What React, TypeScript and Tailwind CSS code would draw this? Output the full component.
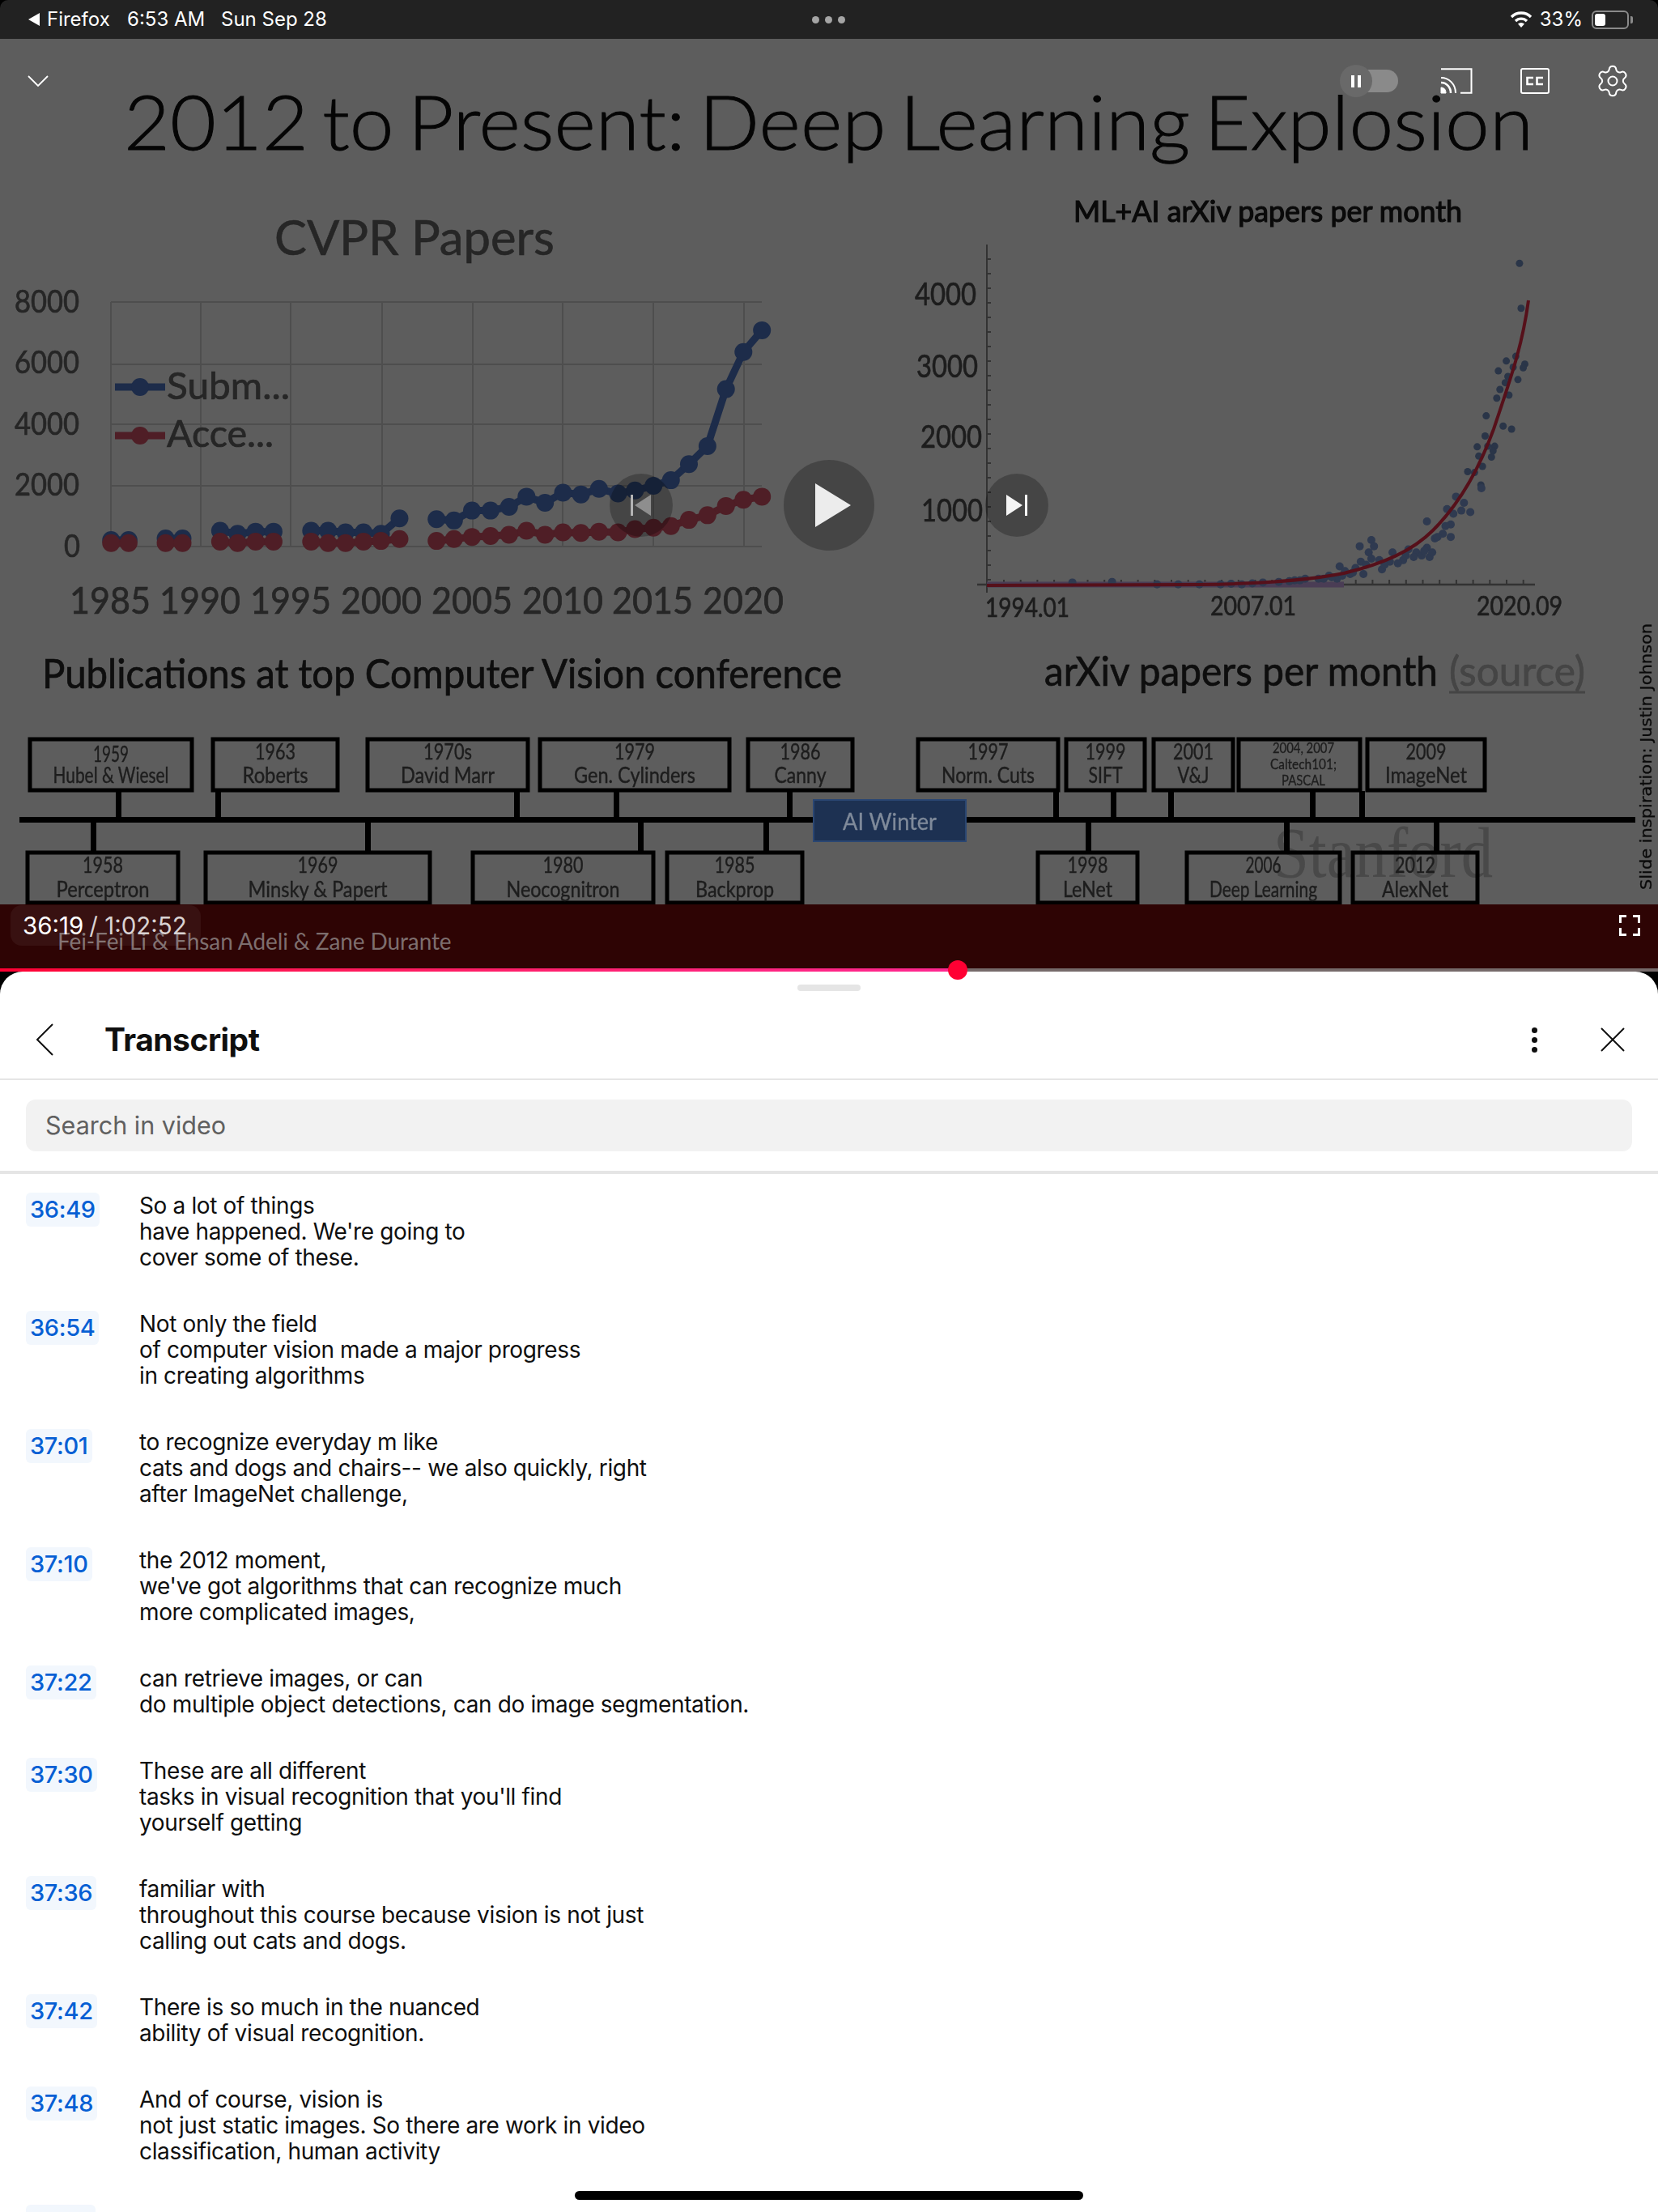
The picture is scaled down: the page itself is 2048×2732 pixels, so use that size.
import React from "react";
import { Settings } from "lucide-react";

const X1 = (x: number) => x / 1.53;
const X2 = (x: number) => 1024 + x / 1.53;
const Y = (y: number) => 600 + y / 2.613;

const blueA = [[210,175],[243,175]];
const blueB = [[313,170],[345,170]];
const blueC = [[416,145],[449,155],[483,148],[517,148]];
const blueD = [[588,145],[620,145],[653,150],[687,150],[720,155],[755,105]];
const blueE = [[825,108],[858,112],[892,80],[927,80],[962,68],[995,35],[1030,55],[1064,22],[1098,28],[1132,10],[1168,25],[1200,15],[1235,0],[1268,-18],[1302,-70],[1337,-128],[1372,-312],[1405,-432],[1440,-502]];
const redA = [[210,185],[243,185]];
const redB = [[313,185],[345,185]];
const redC = [[416,180],[449,185],[483,180],[517,180]];
const redD = [[588,180],[620,185],[653,185],[687,180],[720,178],[755,172]];
const redE = [[825,178],[858,172],[892,165],[927,162],[962,158],[995,145],[1030,158],[1064,150],[1098,152],[1132,148],[1168,150],[1200,140],[1235,135],[1268,130],[1302,110],[1337,95],[1372,65],[1405,45],[1440,35]];

const scatterTop = [[1305,850],[1308,995],[1298,1150],[1280,1165],[1265,1197],[1315,1175],[1312,1187],[1293,1185],[1283,1215],[1302,1225],[1278,1235],[1268,1257],[1262,1285],[1285,1275],[1242,1342],[1274,1375],[1290,1385],[1240,1407],[1225,1442],[1258,1440],[1245,1440],[1255,1455],[1228,1472],[1252,1475],[1235,1505],[1207,1522],[1220,1525],[1232,1565]];
const scatterBottom = [[1233,8],[1185,35],[1168,75],[1200,55],[1212,85],[1175,125],[1130,115],[1160,155],[1175,165],[1145,170],[1130,200],[1135,230],[1110,215],[1095,205],[1120,225],[1085,240],[1065,215],[1060,245],[1045,270],[1025,175],[1030,195],[1003,195],[1020,215],[1025,235],[1005,245],[1010,285],[995,265],[985,285],[965,260],[975,275],[945,290],[960,300],[925,300],[900,300],[880,305],[850,310],[800,315],[780,318],[740,318],[700,318],[660,318],[620,318],[535,310],[460,312],[1150,165],[1165,130],[1125,210],[1105,230],[1075,250],[1050,255],[1040,240],[1015,255],[990,280],[970,290],[950,295],[935,300],[1090,225],[1140,215],[1180,90],[1195,80],[890,305],[870,308],[820,312],[760,316]];

const topBoxes: [number, number, string, number, string, number][] = [
  [37,237,"1959",44,"Hubel & Wiesel",143],[263,417,"1963",50,"Roberts",81],[454,652,"1970s",60,"David Marr",116],[667,901,"1979",50,"Gen. Cylinders",150],[924,1053,"1986",50,"Canny",64],
  [1134,1307,"1997",50,"Norm. Cuts",115],[1317,1414,"1999",50,"SIFT",42],[1425,1523,"2001",50,"V&J",39],[1689,1834,"2009",50,"ImageNet",101],
];
const bottomBoxes: [number, number, string, number, string, number][] = [
  [34,220,"1958",50,"Perceptron",115],[254,531,"1969",50,"Minsky & Papert",172],[584,807,"1980",50,"Neocognitron",140],[824,991,"1985",50,"Backprop",97],
  [1282,1405,"1998",50,"LeNet",61],[1466,1655,"2006",44,"Deep Learning",133],[1671,1825,"2012",50,"AlexNet",82],
];
const upTicks = [146,269,638,761,975,1304,1375,1446,1621,1682];
const downTicks = [115,454,791,946,1344,1589,1774];
const years = [[86,"1985"],[197,"1990"],[309,"1995"],[421,"2000"],[533,"2005"],[645,"2010"],[756,"2015"],[868,"2020"]] as [number,string][];

function T({ x, y, s, w, fill, children, heavy = 0.7, anchor }: { x: number; y: number; s: number; w: number; fill: string; children: React.ReactNode; heavy?: number; anchor?: "middle" }) {
  return (
    <text x={x} y={y} fontSize={s} fill={fill} stroke={fill} strokeWidth={heavy} textLength={w} lengthAdjust="spacingAndGlyphs" textAnchor={anchor}>
      {children}
    </text>
  );
}

function Series({ pts, color }: { pts: number[][]; color: string }) {
  const p = pts.map(([x, y]) => [X1(x), Y(y)]);
  return (
    <g>
      <polyline points={p.map((q) => q.join(",")).join(" ")} fill="none" stroke={color} strokeWidth={9} />
      {p.map(([x, y], i) => (
        <circle key={i} cx={x} cy={y} r={11} fill={color} />
      ))}
    </g>
  );
}

function Slide() {
  const dark = "#262626";
  const blue = "#1d2c4a";
  const red = "#4f1e26";
  return (
    <svg className="absolute inset-0 w-full h-full blur-[0.4px]" viewBox="0 48 2048 1148" fontFamily="Lato, sans-serif">
      <text x={153} y={185} fontSize={92} fontWeight={300} wordSpacing={-9} fill="#050505" stroke="#050505" strokeWidth={0.9} textLength={1741} lengthAdjust="spacingAndGlyphs">2012 to Present: Deep Learning Explosion</text>
      <T x={339} y={315} s={60} w={346} fill={dark} heavy={0.6}>CVPR Papers</T>

      {[373,450,524,600,675].map((y) => <line key={y} x1={137} x2={941} y1={y} y2={y} stroke="#4e4e4e" strokeWidth={2} />)}
      {[137,248,359,472,584,695,807,919].map((x) => <line key={x} x1={x} x2={x} y1={373} y2={675} stroke="#4e4e4e" strokeWidth={2} />)}
      {([[384,"8000"],[459,"6000"],[535,"4000"],[610,"2000"]] as [number,string][]).map(([y,t]) => (
        <T key={t} x={18} y={y+2} s={38} w={80} fill={dark}>{t}</T>
      ))}
      <T x={79} y={688} s={38} w={20} fill={dark}>0</T>

      <line x1={142} x2={204} y1={478} y2={478} stroke={blue} strokeWidth={9} />
      <circle cx={173} cy={478} r={11} fill={blue} />
      <T x={206} y={493} s={46} w={152} fill={dark}>Subm...</T>
      <line x1={142} x2={204} y1={538} y2={538} stroke={red} strokeWidth={9} />
      <circle cx={173} cy={538} r={11} fill={red} />
      <T x={206} y={552} s={46} w={132} fill={dark}>Acce...</T>

      {[blueA,blueB,blueC,blueD,blueE].map((s,i) => <Series key={i} pts={s} color={blue} />)}
      {[redA,redB,redC,redD,redE].map((s,i) => <Series key={i} pts={s} color={red} />)}

      {years.map(([x,t]) => <T key={t} x={x} y={758} s={46} w={100} fill={dark}>{t}</T>)}
      <T x={52} y={850} s={50} w={988} fill="#0e0e0e">Publications at top Computer Vision conference</T>

      <T x={1326} y={274} s={36} w={480} fill="#0a0a0a" heavy={1.2}>ML+AI arXiv papers per month</T>
      <line x1={1219} x2={1219} y1={302} y2={732} stroke="#333" strokeWidth={2} />
      <line x1={1207} x2={1896} y1={722} y2={722} stroke="#333" strokeWidth={2.5} />
      {Array.from({ length: 23 }, (_, i) => 320 + i * 18).map((y) => <line key={y} x1={1219} x2={1224} y1={y} y2={y} stroke="#333" strokeWidth={2} />)}
      {Array.from({ length: 32 }, (_, i) => 1240 + i * 20.7).map((x) => <line key={x} x1={x} x2={x} y1={716} y2={722} stroke="#333" strokeWidth={2} />)}
      {([[375,"4000",1130],[464,"3000",1132],[551,"2000",1137],[642,"1000",1138]] as [number,string,number][]).map(([y,t,x]) => (
        <T key={t} x={x} y={y+2} s={38} w={76} fill="#1d1d1d">{t}</T>
      ))}
      <line x1={1219} x2={1660} y1={722} y2={722} stroke="#4a3d55" strokeWidth={7} />
      {scatterTop.map(([x,y],i) => <circle key={i} cx={X2(x)} cy={y/2.613} r={4.5} fill="#2a3548" />)}
      {scatterBottom.map(([x,y],i) => <circle key={i} cx={X2(x)} cy={Y(y)} r={5} fill="#2f3a50" />)}
      <path d="M1219 723 L1481 722 C1560 721 1620 716 1660 708 C1710 696 1745 680 1770 655 C1800 625 1825 585 1845 530 C1865 470 1880 430 1888 371" fill="none" stroke="#56101a" strokeWidth={4} />
      <T x={1217} y={762} s={32} w={104} fill="#1d1d1d">1994.01</T>
      <T x={1495} y={760} s={32} w={106} fill="#1d1d1d">2007.01</T>
      <T x={1824} y={760} s={32} w={106} fill="#1d1d1d">2020.09</T>
      <T x={1290} y={847} s={50} w={486} fill="#0e0e0e">arXiv papers per month</T>
      <T x={1790} y={847} s={50} w={168} fill="#454545">(source)</T>
      <line x1={1790} x2={1958} y1={855} y2={855} stroke="#454545" strokeWidth={3} />

      <text x={1573} y={1083} fontSize={88} fontFamily="'Liberation Serif', serif" fill="#494949" textLength={271} lengthAdjust="spacingAndGlyphs">Stanford</text>

      <rect x={24} y={1009} width={1996} height={7} fill="#000" />
      {upTicks.map((x) => <rect key={x} x={x-3} y={977} width={7} height={35} fill="#000" />)}
      {downTicks.map((x) => <rect key={x} x={x-3} y={1013} width={7} height={40} fill="#000" />)}
      {topBoxes.map(([a,b,y,yw,n,nw]) => (
        <g key={y}>
          <rect x={a} y={913} width={b-a} height={63} fill="none" stroke="#000" strokeWidth={5} />
          <T x={(a+b)/2} y={y === "1959" ? 941 : 938} s={26} w={yw} anchor="middle" fill="#1d1d1d" heavy={0.4}>{y}</T>
          <T x={(a+b)/2} y={967} s={26} w={nw} anchor="middle" fill="#1d1d1d" heavy={0.4}>{n}</T>
        </g>
      ))}
      <rect x={1530} y={913} width={150} height={63} fill="none" stroke="#000" strokeWidth={5} />
      <T x={1610} y={930} s={17} w={76} anchor="middle" fill="#1d1d1d" heavy={0.3}>2004, 2007</T>
      <T x={1610} y={950} s={17} w={82} anchor="middle" fill="#1d1d1d" heavy={0.3}>Caltech101;</T>
      <T x={1610} y={970} s={17} w={54} anchor="middle" fill="#1d1d1d" heavy={0.3}>PASCAL</T>
      {bottomBoxes.map(([a,b,y,yw,n,nw]) => (
        <g key={y}>
          <rect x={a} y={1053} width={b-a} height={62} fill="none" stroke="#000" strokeWidth={5} />
          <T x={(a+b)/2} y={1078} s={26} w={yw} anchor="middle" fill="#1d1d1d" heavy={0.4}>{y}</T>
          <T x={(a+b)/2} y={1108} s={26} w={nw} anchor="middle" fill="#1d1d1d" heavy={0.4}>{n}</T>
        </g>
      ))}
      <rect x={1005} y={988} width={188} height={51} fill="#1d3152" stroke="#2a4672" strokeWidth={2} />
      <T x={1099} y={1025} s={28} w={116} anchor="middle" fill="#7f8a9a" heavy={0.3}>AI Winter</T>
      <text transform="translate(2040 1099) rotate(-90)" fontSize={20} fontFamily="'DejaVu Sans', sans-serif" fill="#0a0a0a" stroke="#0a0a0a" strokeWidth={0.3} textLength={329} lengthAdjust="spacingAndGlyphs">Slide inspiration: Justin Johnson</text>
    </svg>
  );
}

function StatusBar() {
  return (
    <div className="h-[48px] shrink-0 rounded-t-[10px] bg-[#222222] flex items-center justify-between pl-[34px] pr-[36px] text-white text-[24px] [font-family:Inter,sans-serif]">
      <div className="flex items-center">
        <svg width="16" height="16" viewBox="0 0 16 16" className="mr-[8px]"><path d="M15 0v16L1 8z" fill="#fff" /></svg>
        <span className="w-[99px]">Firefox</span>
        <span className="w-[116px]">6:53 AM</span>
        <span>Sun Sep 28</span>
      </div>
      <div className="flex items-center gap-[7px] absolute left-[1003px]">
        <span className="w-[9px] h-[9px] rounded-full bg-[#a5a5a5]" />
        <span className="w-[9px] h-[9px] rounded-full bg-[#a5a5a5]" />
        <span className="w-[9px] h-[9px] rounded-full bg-[#a5a5a5]" />
      </div>
      <div className="flex items-center">
        <svg width="28" height="20" viewBox="0 0 28 20" className="mr-[9px]">
          <path d="M2 7a17 17 0 0 1 24 0" fill="none" stroke="#fff" strokeWidth="3.4" />
          <path d="M7 12a10 10 0 0 1 14 0" fill="none" stroke="#fff" strokeWidth="3.4" />
          <path d="M14 20l-4-4.500a6 6 0 0 1 8 0z" fill="#fff" />
        </svg>
        <span className="mr-[11px]">33%</span>
        <div className="relative w-[46px] h-[23px] rounded-[6px] border-2 border-[#8a8a8a] p-[2px]">
          <div className="w-[13px] h-full rounded-[3px] bg-white" />
          <div className="absolute right-[-7px] top-[5px] w-[3px] h-[9px] rounded-r-[2px] bg-[#8a8a8a]" />
        </div>
      </div>
    </div>
  );
}

function TopControls() {
  return (
    <div className="absolute left-0 right-0 top-[32px] h-[40px] flex items-center pl-[34px] pr-[34px] text-white">
      <svg width="26" height="14" viewBox="0 0 26 14" fill="none" stroke="#fff" strokeWidth="1.8"><path d="M1 1l12 12L25 1" /></svg>
      <div className="ml-auto relative w-[72px] h-[28px] flex justify-end">
        <div className="w-[60px] h-[28px] rounded-full bg-[#8a8a8a]" />
        <div className="absolute left-[0px] top-[-6px] w-[40px] h-[40px] rounded-full bg-[#696969] flex items-center justify-center gap-[4px]">
          <span className="w-[4px] h-[15px] bg-white" />
          <span className="w-[4px] h-[15px] bg-white" />
        </div>
      </div>
      <svg width="40" height="32" viewBox="0 0 40 32" fill="none" stroke="#fff" className="ml-[52px]">
        <path d="M1 1.200h37.500v29.600H25" strokeWidth="2" />
        <path d="M1 12c10 0 18 8 18 19" strokeWidth="2" />
        <path d="M1 18c7 0 12 6 12 13" strokeWidth="2.500" />
        <path d="M1 24c4 0 6 3 6 7H1z" fill="#fff" strokeWidth="1" />
      </svg>
      <div className="ml-[59px] w-[36px] h-[32px] border-[2.5px] border-white rounded-[3px] flex items-center justify-center">
        <svg width="24" height="12" viewBox="0 0 24 12" fill="none" stroke="#fff" strokeWidth="2.600">
          <path d="M10 2H2.500v8H10" /><path d="M22 2h-7.500v8H22" />
        </svg>
      </div>
      <Settings size={44} strokeWidth={1.1} className="ml-[56px]" />
    </div>
  );
}

function CenterControls() {
  return (
    <div className="absolute left-0 right-0 top-[520px] h-[112px] flex items-center justify-center gap-[137px]">
      <div className="w-[78px] h-[78px] rounded-full bg-black/25 flex items-center justify-center">
        <svg width="26" height="26" viewBox="0 0 26 26"><rect width="3" height="26" fill="#b4b4b4" /><path d="M25 0v26L5 13z" fill="#8e8e8e" /></svg>
      </div>
      <div className="w-[112px] h-[112px] rounded-full bg-black/25 flex items-center justify-center pl-[10px]">
        <svg width="44" height="54" viewBox="0 0 44 54"><path d="M0 0l44 27L0 54z" fill="#ececec" /></svg>
      </div>
      <div className="w-[78px] h-[78px] rounded-full bg-black/25 flex items-center justify-center">
        <svg width="26" height="26" viewBox="0 0 26 26"><path d="M0 0v26l20-13z" fill="#f5f5f5" /><rect x="23" width="3" height="26" fill="#fff" /></svg>
      </div>
    </div>
  );
}

function BottomStrip() {
  return (
    <div className="absolute left-0 right-0 bottom-0 h-[79px] bg-[#2e0404] [font-family:Inter,sans-serif]">
      <div className="absolute left-[71px] top-[27px] text-[28px] leading-[36px] tracking-[-0.1px] text-[#7d6e6e] [font-family:Lato,sans-serif]">Fei-Fei Li &amp; Ehsan Adeli &amp; Zane Durante</div>
      <div className="absolute left-[13px] top-[1px] w-[235px] h-[50px] rounded-[14px] bg-white/5 flex items-center pl-[15px] text-[29.5px]">
        <span className="text-white">36:19</span>
        <span className="text-[#d9d3d3] ml-[7px]">/ 1:02:52</span>
      </div>
      <svg width="26" height="26" viewBox="0 0 26 26" fill="none" stroke="#fff" strokeWidth="3" className="absolute left-[2000px] top-[13px]">
        <path d="M9 1.500H1.500V10M17 1.500h7.500V10M1.500 16v8.500H9M24.500 16v8.500H17" />
      </svg>
    </div>
  );
}

function Progress() {
  return (
    <div className="relative h-[4px] shrink-0 bg-[#766a6a]">
      <div className="h-full w-[1183px] bg-gradient-to-r from-[#ff0033] to-[#ff2791]" />
      <div className="absolute left-[1171px] top-[-10px] w-[24px] h-[24px] rounded-full bg-[#ff0033] z-10" />
    </div>
  );
}

const rows: [string, string[]][] = [
  ["36:49", ["So a lot of things", "have happened. We're going to", "cover some of these."]],
  ["36:54", ["Not only the field", "of computer vision made a major progress", "in creating algorithms"]],
  ["37:01", ["to recognize everyday m like", "cats and dogs and chairs-- we also quickly, right", "after ImageNet challenge,"]],
  ["37:10", ["the 2012 moment,", "we've got algorithms that can recognize much", "more complicated images,"]],
  ["37:22", ["can retrieve images, or can", "do multiple object detections, can do image segmentation."]],
  ["37:30", ["These are all different", "tasks in visual recognition that you'll find", "yourself getting"]],
  ["37:36", ["familiar with", "throughout this course because vision is not just", "calling out cats and dogs."]],
  ["37:42", ["There is so much in the nuanced", "ability of visual recognition."]],
  ["37:48", ["And of course, vision is", "not just static images. So there are work in video", "classification, human activity"]],
];

function Sheet() {
  return (
    <div className="relative flex-1 min-h-0 rounded-t-[28px] bg-white flex flex-col overflow-hidden [font-family:Inter,sans-serif]">
      <div className="h-[132px] shrink-0 relative flex items-center pt-[36px]">
        <div className="absolute left-[985px] top-[16px] w-[78px] h-[8px] rounded-full bg-[#e5e5e5]" />
        <svg width="22" height="40" viewBox="0 0 22 40" fill="none" stroke="#0f0f0f" strokeWidth="2" className="ml-[44px]"><path d="M21 1L2 20l19 19" /></svg>
        <h1 className="ml-[63px] text-[39px] font-bold leading-[48px] text-[#0f0f0f] tracking-[-0.5px]">Transcript</h1>
        <div className="ml-auto flex flex-col gap-[5px] mr-[78px]">
          <span className="w-[7px] h-[7px] rounded-full bg-[#0f0f0f]" />
          <span className="w-[7px] h-[7px] rounded-full bg-[#0f0f0f]" />
          <span className="w-[7px] h-[7px] rounded-full bg-[#0f0f0f]" />
        </div>
        <svg width="30" height="30" viewBox="0 0 30 30" fill="none" stroke="#0f0f0f" strokeWidth="2" className="mr-[41px]"><path d="M1 1l28 28M29 1L1 29" /></svg>
      </div>
      <div className="h-[2px] shrink-0 bg-[#e5e5e5]" />
      <div className="px-[32px] pt-[24px] pb-[24px] shrink-0">
        <div className="h-[64px] rounded-[12px] bg-[#f2f2f2] flex items-center pl-[24px] text-[30.5px] text-[#606060]">Search in video</div>
      </div>
      <div className="h-[4px] shrink-0 bg-[#e5e5e5]" />
      <div className="pt-[23px] pl-[32px] text-[28px] leading-[32px] tracking-[-0.36px] text-[#0f0f0f]">
        {rows.map(([t, lines]) => (
          <div key={t} className="flex items-start pb-[50px]">
            <div className="w-[140px] shrink-0">
              <span className="inline-block h-[42px] rounded-[6px] bg-[#f2f7fd] px-[5px] text-[29px] leading-[42px] font-medium text-[#065fd4]">{t}</span>
            </div>
            <div>
              {lines.map((l) => <div key={l}>{l}</div>)}
            </div>
          </div>
        ))}
        <div className="h-[42px] w-[86px] rounded-[6px] bg-[#f2f7fd]" />
      </div>
      <div className="absolute left-[710px] bottom-[15px] w-[628px] h-[11px] rounded-full bg-black" />
    </div>
  );
}

export default function App() {
  return (
    <div className="relative w-[2048px] h-[2732px] overflow-hidden bg-black flex flex-col">
      <StatusBar />
      <div className="relative h-[1148px] shrink-0 bg-[#5d5d5d]">
        <Slide />
        <BottomStrip />
        <TopControls />
        <CenterControls />
      </div>
      <Progress />
      <Sheet />
    </div>
  );
}
